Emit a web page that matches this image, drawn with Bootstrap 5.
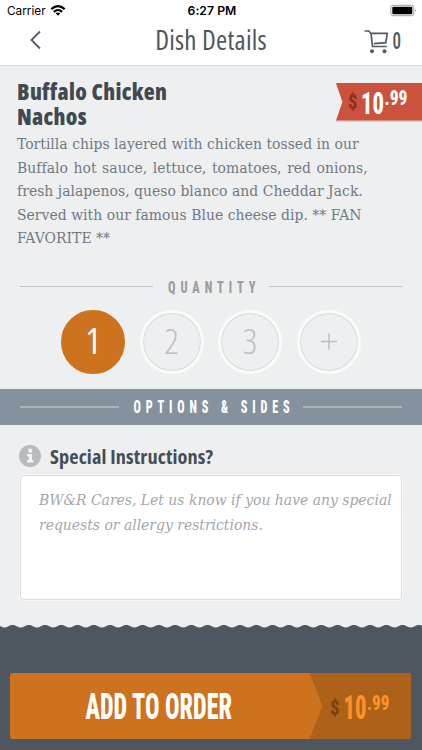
<!DOCTYPE html>
<html lang="en">
<head>
<meta charset="utf-8">
<meta name="viewport" content="width=device-width, initial-scale=1">
<title>Dish Details</title>
<link rel="stylesheet" href="https://cdn.jsdelivr.net/npm/bootstrap@5.3.0/dist/css/bootstrap.min.css">
<style>
body{width:422px;height:750px;overflow:hidden;background:#eeeff1;color:#454c54;font-family:"Open Sans",sans-serif}
.narrow{font-family:"Open Sans",sans-serif;font-stretch:75%}
.slab{font-family:"DejaVu Serif",serif;font-stretch:75%}
.lettering{font-family:"Roboto","Open Sans",sans-serif;font-stretch:75%;font-weight:800}
svg{display:block;flex:none;overflow:visible}
.status{height:20px;padding:0 5px 0 7px;font:400 11.8px/22px "Inter",sans-serif;color:#000}
.status .clock{font-weight:600;font-size:12.2px;letter-spacing:.05px}
.side{width:120px}
.topnav{height:46px;border-bottom:1px solid #d6d8da;padding:0 20px 0 29px}
.topnav .back{width:111px}
.topnav h1{font-size:27px;line-height:40px;font-weight:400;height:45px;letter-spacing:.25px;color:#50575f}
.dish{height:200px;padding:13px 0 0 17px}
.dish h2{font-size:22.5px;line-height:25px;font-weight:800;letter-spacing:.33px;color:#414950;width:200px;margin:0;height:54px}
.price-tag{margin-top:4px}
.desc{font-size:15.5px;line-height:23.55px;color:#717983;white-space:nowrap;letter-spacing:.03px}
.desc .airy{word-spacing:1.1px}
.rule{height:1px;background:#bfc2c5}
.quantity{height:41px;padding:0 20px}
.sizes{height:82px;padding:3px 0 0 61px;gap:14.5px}
.qty{width:64px;height:64px;border-radius:50%;border:3px solid #f9fafa;box-shadow:inset 0 0 0 1px #d8d9db;font-size:35.5px;line-height:1;font-weight:300;color:#babec4;background:#eeeff1;padding:0 0 2px}
.qty.active{background:#cd721e;border-color:#cd721e;box-shadow:none;color:#fff;font-weight:400}
.options{height:36px;background:#85929d;padding:0 20px}
.options .rule{background:#a9b3bc;height:2px}
.special{padding:19px 20px 0 19px;height:200px}
.special label{font-size:20.3px;line-height:24px;font-weight:700;letter-spacing:.12px;color:#454d55}
.notes{resize:none;margin:7px 0 0 1px;width:382px;height:125px;padding:12px 0 0 18px;border:1px solid #d9dadc;outline:1px solid #f8f8f9;border-radius:4px;font-size:15.5px;line-height:25px;font-style:italic;background:#fff}
.notes::placeholder{color:#a5a7aa;opacity:1}
.foot{background:#4e565f;height:125px}
.order{width:401px;height:66px;border-radius:3px;background:#cd721e;margin:39px auto 0 10px;overflow:hidden}
</style>
<script src="https://cdn.jsdelivr.net/npm/bootstrap@5.3.0/dist/js/bootstrap.bundle.min.js"></script>
</head>
<body>
<header class="bg-white">
  <div class="status d-flex justify-content-between">
    <div class="side d-flex">
      <span>Carrier</span>
      <svg class="ms-1 mt-1" width="16" height="13" viewBox="0 0 16 13" fill="none" stroke="#000" stroke-width="2.1"><path d="M1.3 5.1Q8-.9 14.7 5.1M3.8 7.9Q8 4.1 12.2 7.9"/><path fill="#000" stroke="none" d="M5.7 9.3Q8 7.5 10.3 9.3L8 11.7z"/></svg>
    </div>
    <span class="clock">6:27 PM</span>
    <div class="side d-flex justify-content-end">
      <svg class="mt-1" width="27" height="13" viewBox="0 0 27 13"><rect x=".8" y="1.3" width="23" height="10.4" rx="2.4" fill="none" stroke="#a0a0a0"/><rect x="2.3" y="2.8" width="20" height="7.4" rx="1" fill="#000"/><path d="M25 4.8q1.8 1.7 0 3.4z" fill="#999"/></svg>
    </div>
  </div>
  <nav class="topnav d-flex justify-content-between">
    <div class="back">
      <svg width="14" height="40" viewBox="0 0 14 40" fill="none" stroke="#535b64" stroke-width="1.8"><path d="M11 11.5L2.5 20 11 28.5"/></svg>
    </div>
    <h1 class="narrow m-0">Dish Details</h1>
    <div class="side d-flex justify-content-end">
      <svg class="mt-2" width="24" height="28" viewBox="0 0 24 28" fill="none" stroke="#535b64" stroke-width="1.7"><path d="M.5 3h4.3l2.200 2.300L8.500 18.500h14.300M7 5.300h16.200L21.800 14.700 9.800 15.700"/><circle cx="8" cy="23.300" r="2" fill="#535b64" stroke="none"/><circle cx="20.500" cy="23.300" r="2" fill="#535b64" stroke="none"/></svg>
      <svg class="lettering mt-2" width="14" height="28"><text x="4.500" y="20.700" font-size="23" font-weight="500" fill="#50575f" textLength="8.500" lengthAdjust="spacingAndGlyphs">0</text></svg>
    </div>
  </nav>
</header>
<main>
  <section class="dish">
    <div class="d-flex justify-content-between">
      <h2 class="narrow">Buffalo Chicken<br>Nachos</h2>
      <svg class="price-tag lettering" width="86" height="40" viewBox="0 0 86 40"><path d="M0 1.5h86V39H0l6.500-18.700z" fill="#d5d3d4"/><path d="M0 0h86v37.500H0l6.500-18.800z" fill="#cb523c"/>
        <text x="12" y="26" font-size="20" fill="#8e3021" textLength="9.500" lengthAdjust="spacingAndGlyphs">$</text>
        <text x="25" y="30.500" font-size="32" fill="#fff" textLength="23" lengthAdjust="spacingAndGlyphs">10</text>
        <text x="48.500" y="22" font-size="21" fill="#fff" textLength="23" lengthAdjust="spacingAndGlyphs">.99</text></svg>
    </div>
    <p class="desc slab m-0">Tortilla chips layered with chicken tossed in our<br><span class="airy">Buffalo hot sauce, lettuce, tomatoes, red onions,</span><br>fresh jalapenos, queso blanco and Cheddar Jack.<br>Served with our famous Blue cheese dip. ** FAN<br>FAVORITE **</p>
  </section>
  <div class="quantity d-flex align-items-center">
    <div class="rule flex-fill"></div>
    <svg class="lettering" width="116" height="24"><text x="15" y="17.500" font-size="17" fill="#999ca0" letter-spacing="6.800" textLength="92.500" lengthAdjust="spacingAndGlyphs">QUANTITY</text></svg>
    <div class="rule flex-fill"></div>
  </div>
  <div class="sizes d-flex align-items-start">
    <button class="qty active narrow" type="button">1</button>
    <button class="qty narrow" type="button">2</button>
    <button class="qty narrow" type="button">3</button>
    <button class="qty d-flex align-items-center justify-content-center" type="button" aria-label="More"><svg width="18" height="18" stroke="#babec4" stroke-width="1.500"><path d="M1 9.500h16M9 1.500v16"/></svg></button>
  </div>
  <div class="options d-flex align-items-center">
    <div class="rule flex-fill"></div>
    <svg class="lettering" width="184" height="24"><text x="14.500" y="17.500" font-size="17.500" fill="#fff" letter-spacing="7" textLength="161" lengthAdjust="spacingAndGlyphs">OPTIONS &amp; SIDES</text></svg>
    <div class="rule flex-fill"></div>
  </div>
  <section class="special">
    <div class="d-flex align-items-center">
      <svg width="23" height="24" viewBox="0 0 23 24"><circle cx="11" cy="12" r="11" fill="#b8babd"/><path d="M9.300 4.700h3.800v3.700H9.300zM8 10h5v6.200h1.500v2.200H8v-2.200h1.600v-4H8z" fill="#f3f4f5"/></svg>
      <label for="notes" class="narrow ms-2">Special Instructions?</label>
    </div>
    <textarea id="notes" class="notes slab d-block" placeholder="BW&amp;R Cares, Let us know if you have any special
requests or allergy restrictions."></textarea>
  </section>
</main>
<footer class="foot">
  <svg width="422" height="9"><defs><pattern id="wave" width="16.250" height="9" patternUnits="userSpaceOnUse" x="4.500"><path d="M0 0V2.500C3 2.500 5-.2 8.100-.2S13.200 2.500 16.250 2.500V0z" fill="#eeeff1"/></pattern></defs><rect width="422" height="9" fill="url(#wave)"/></svg>
  <a class="order d-block" href="#" aria-label="Add to order">
    <svg class="lettering" width="401" height="66"><path d="M299.500 0H401V66H299.500L312.500 33z" fill="#ae6119"/>
      <text x="75.500" y="45.500" font-size="36.500" fill="#fff" textLength="146.500" lengthAdjust="spacingAndGlyphs">ADD TO ORDER</text>
      <text x="320" y="41.500" font-size="21" fill="#7c430f" textLength="9.500" lengthAdjust="spacingAndGlyphs">$</text>
      <text x="333.500" y="45.500" font-size="33" fill="#ff9227" textLength="23" lengthAdjust="spacingAndGlyphs">10</text>
      <text x="357" y="36.500" font-size="21" fill="#ff9227" textLength="22.500" lengthAdjust="spacingAndGlyphs">.99</text></svg>
  </a>
</footer>
</body>
</html>
